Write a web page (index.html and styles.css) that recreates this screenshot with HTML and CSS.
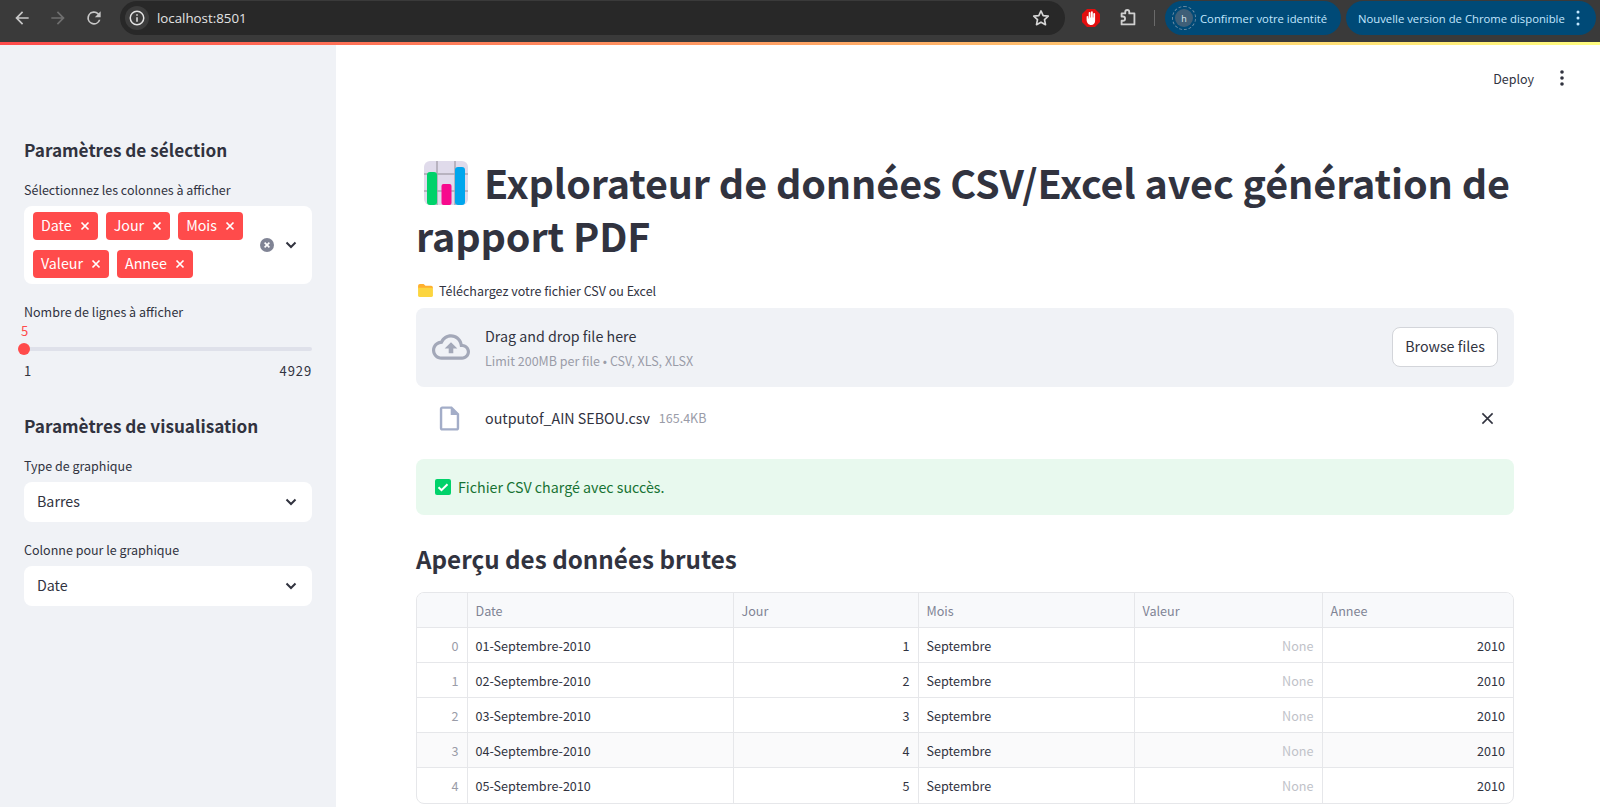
FILE: index.html
```html
<!DOCTYPE html>
<html lang="fr">
<head>
<meta charset="utf-8">
<title>localhost:8501</title>
<link rel="stylesheet" href="styles.css">
</head>
<body>
<header class="chrome">
  <div class="nav">
    <svg class="nav-icon" viewBox="0 0 24 24"><path d="M20 11H7.800l5.600-5.600L12 4l-8 8 8 8 1.400-1.400L7.800 13H20z" fill="#c7c7c7"/></svg>
    <svg class="nav-icon" viewBox="0 0 24 24"><path d="M4 11h12.200l-5.600-5.600L12 4l8 8-8 8-1.400-1.400 5.600-5.600H4z" fill="#6f6f6f"/></svg>
    <svg class="nav-icon" viewBox="0 0 24 24"><path d="M17.650 6.350A8 8 0 1 0 19.730 14h-2.080A6 6 0 1 1 12 6c1.660 0 3.140.69 4.220 1.780L13 11h7V4z" fill="#c7c7c7"/></svg>
  </div>
  <div class="omnibox">
    <span class="info"><svg viewBox="0 0 24 24" width="18" height="18"><circle cx="12" cy="12" r="9" fill="none" stroke="#e3e3e3" stroke-width="2"/><path d="M11 11h2v6h-2zM11 7h2v2h-2z" fill="#e3e3e3"/></svg></span>
    <span class="url">localhost:8501</span>
    <svg class="star" viewBox="0 0 24 24"><path d="M12 3.500l2.600 5.600 6.100.7-4.500 4.200 1.200 6L12 17l-5.400 3 1.200-6-4.500-4.200 6.100-.7z" fill="none" stroke="#d6d6d6" stroke-width="2" stroke-linejoin="round"/></svg>
  </div>
  <svg class="hand" viewBox="0 0 20 20"><path d="M6 1h8l5 5v8l-5 5H6l-5-5V6z" fill="#e20f0f"/><path d="M5.600 8.500V11.500c0 3.300 1.900 5.500 4.500 5.500s4-1.800 4-4V5.800a.9.900 0 0 0-1.800 0V9.500h-.5V4.200a.9.900 0 0 0-1.800 0V9.500h-.5V4.800a.9.900 0 0 0-1.800 0V10.500h-.4V8.500a.9.900 0 0 0-1.700 0z" fill="#fff"/></svg>
  <svg class="puzzle" viewBox="0 0 24 24"><path d="M9 5.500a2.200 2.200 0 0 1 4.400 0V7H19v12H5v-4h1.500a2.300 2.300 0 0 0 0-4.600H5V7h4z" fill="none" stroke="#d0d0d0" stroke-width="2" stroke-linejoin="round"/></svg>
  <span class="divider"></span>
  <div class="chip chip-id">
    <span class="avatar">h</span>
    <span>Confirmer votre identité</span>
  </div>
  <div class="chip chip-update">
    <span>Nouvelle version de Chrome disponible</span>
    <svg class="chip-dots" viewBox="0 0 4 16"><circle cx="2" cy="2" r="1.500"/><circle cx="2" cy="8" r="1.500"/><circle cx="2" cy="14" r="1.500"/></svg>
  </div>
</header>
<div class="decoration"></div>
<div class="app">
  <aside class="sidebar">
    <h2 class="side-heading first">Paramètres de sélection</h2>
    <label class="label label-first">Sélectionnez les colonnes à afficher</label>
    <div class="multiselect">
      <div class="tags">
        <span class="tag">Date<svg class="tag-x" viewBox="0 0 10 10"><path d="M1.500 1.500l7 7M8.500 1.500l-7 7"/></svg></span>
        <span class="tag">Jour<svg class="tag-x" viewBox="0 0 10 10"><path d="M1.500 1.500l7 7M8.500 1.500l-7 7"/></svg></span>
        <span class="tag">Mois<svg class="tag-x" viewBox="0 0 10 10"><path d="M1.500 1.500l7 7M8.500 1.500l-7 7"/></svg></span>
        <span class="tag">Valeur<svg class="tag-x" viewBox="0 0 10 10"><path d="M1.500 1.500l7 7M8.500 1.500l-7 7"/></svg></span>
        <span class="tag">Annee<svg class="tag-x" viewBox="0 0 10 10"><path d="M1.500 1.500l7 7M8.500 1.500l-7 7"/></svg></span>
      </div>
      <svg class="clear" viewBox="0 0 14 14"><circle cx="7" cy="7" r="7" fill="#808495"/><path d="M4.600 4.600l4.800 4.800M9.400 4.600l-4.800 4.800" stroke="#fff" stroke-width="1.600"/></svg>
      <svg class="chevron" viewBox="0 0 12 8"><path d="M1.500 1.500L6 6l4.500-4.500" fill="none" stroke="#31333f" stroke-width="2"/></svg>
    </div>
    <label class="label label-slider">Nombre de lignes à afficher</label>
    <div class="slider">
      <div class="slider-value">5</div>
      <div class="track"><span class="thumb"></span></div>
      <div class="slider-range"><span>1</span><span>4929</span></div>
    </div>
    <h2 class="side-heading second">Paramètres de visualisation</h2>
    <label class="label label-first">Type de graphique</label>
    <div class="select"><span>Barres</span><svg class="chevron" viewBox="0 0 12 8"><path d="M1.500 1.500L6 6l4.500-4.500" fill="none" stroke="#31333f" stroke-width="2"/></svg></div>
    <label class="label label-next">Colonne pour le graphique</label>
    <div class="select"><span>Date</span><svg class="chevron" viewBox="0 0 12 8"><path d="M1.500 1.500L6 6l4.500-4.500" fill="none" stroke="#31333f" stroke-width="2"/></svg></div>
  </aside>
  <main class="main">
    <div class="toolbar">
      <span class="deploy">Deploy</span>
      <svg class="menu-dots" viewBox="0 0 4 16"><circle cx="2" cy="2" r="1.800"/><circle cx="2" cy="8" r="1.800"/><circle cx="2" cy="14" r="1.800"/></svg>
    </div>
    <h1 class="title"><svg class="title-emoji" viewBox="0 0 44 44"><rect width="44" height="44" rx="6" fill="#e0dbeb"/><path d="M13 0v44M31 0v44M0 13h44M0 30h44" stroke="#aaa6b3" stroke-width="1.500"/><rect x="3" y="11" width="10" height="33" rx="3" fill="#00d26a"/><rect x="17.500" y="23" width="10" height="21" rx="2" fill="#f70a8d"/><rect x="31" y="6" width="10" height="38" rx="3" fill="#00a6ed"/></svg>Explorateur de données CSV/Excel avec génération de<br>rapport PDF</h1>
    <div class="caption"><svg class="folder" viewBox="0 0 16 14"><path d="M0 2a2 2 0 0 1 2-2h4l2 2h6a2 2 0 0 1 2 2v1H0z" fill="#ffb02e"/><path d="M0 4h14a2 2 0 0 1 2 2v6a2 2 0 0 1-2 2H2a2 2 0 0 1-2-2z" fill="#fcd53f"/></svg>Téléchargez votre fichier CSV ou Excel</div>
    <section class="uploader">
      <svg class="cloud" viewBox="0 0 24 24"><path d="M19.350 10.040C18.670 6.590 15.640 4 12 4 9.110 4 6.600 5.640 5.350 8.040 2.340 8.360 0 10.910 0 14c0 3.310 2.690 6 6 6h13c2.760 0 5-2.240 5-5 0-2.640-2.050-4.780-4.650-4.960zM19 18H6c-2.210 0-4-1.790-4-4 0-2.050 1.530-3.760 3.560-3.970l1.070-.11.5-.95C8.080 7.140 9.940 6 12 6c2.620 0 4.880 1.860 5.390 4.430l.3 1.500 1.530.11c1.560.1 2.780 1.410 2.780 2.960 0 1.650-1.350 3-3 3zM8 13h2.550v3h2.900v-3H16l-4-4z"/></svg>
      <div class="upload-text">
        <div class="upload-main">Drag and drop file here</div>
        <div class="upload-sub">Limit 200MB per file • CSV, XLS, XLSX</div>
      </div>
      <button class="browse">Browse files</button>
    </section>
    <div class="file-row">
      <svg class="file-icon" viewBox="0 0 24 24"><path d="M14 2H6c-1.100 0-1.990.9-1.990 2L4 20c0 1.100.89 2 1.990 2H18c1.100 0 2-.9 2-2V8l-6-6zM6 20V4h7v5h5v11H6z"/></svg>
      <span class="file-name">outputof_AIN SEBOU.csv</span>
      <span class="file-size">165.4KB</span>
      <svg class="file-x" viewBox="0 0 14 14"><path d="M1.500 1.500l11 11M12.500 1.500l-11 11"/></svg>
    </div>
    <div class="alert"><svg class="check" viewBox="0 0 16 16"><rect width="16" height="16" rx="2" fill="#00d26a"/><path d="M3.500 8.200l3 3 6-6" fill="none" stroke="#fff" stroke-width="2"/></svg>Fichier CSV chargé avec succès.</div>
    <h2 class="section-heading">Aperçu des données brutes</h2>
    <div class="table-wrap">
      <table class="data">
        <thead>
          <tr><th class="c-idx"></th><th class="c-date">Date</th><th class="c-jour">Jour</th><th class="c-mois">Mois</th><th class="c-val">Valeur</th><th>Annee</th></tr>
        </thead>
        <tbody>
          <tr><td class="idx">0</td><td>01-Septembre-2010</td><td class="num">1</td><td>Septembre</td><td class="num none">None</td><td class="num">2010</td></tr>
          <tr><td class="idx">1</td><td>02-Septembre-2010</td><td class="num">2</td><td>Septembre</td><td class="num none">None</td><td class="num">2010</td></tr>
          <tr><td class="idx">2</td><td>03-Septembre-2010</td><td class="num">3</td><td>Septembre</td><td class="num none">None</td><td class="num">2010</td></tr>
          <tr class="hover"><td class="idx">3</td><td>04-Septembre-2010</td><td class="num">4</td><td>Septembre</td><td class="num none">None</td><td class="num">2010</td></tr>
          <tr><td class="idx">4</td><td>05-Septembre-2010</td><td class="num">5</td><td>Septembre</td><td class="num none">None</td><td class="num">2010</td></tr>
        </tbody>
      </table>
    </div>
  </main>
</div>
</body>
</html>
```
FILE: styles.css
```css
* { box-sizing: border-box; }
html, body { margin: 0; height: 807px; overflow: hidden; }
body {
  font-family: "Noto Sans CJK JP", "Source Sans Pro", "Noto Sans", sans-serif;
  color: #31333f;
  background: #fff;
  display: flex;
  flex-direction: column;
}

/* Browser bar */
.chrome {
  height: 42px;
  flex: none;
  background: #3a3a3a;
  display: flex;
  align-items: center;
  padding-bottom: 6px;
  font-family: "Open Sans", "Noto Sans", sans-serif;
  color: #e3e3e3;
}
.nav { display: flex; align-items: center; gap: 16px; padding-left: 12px; width: 120px; }
.nav-icon { width: 20px; height: 20px; flex: none; }
.omnibox {
  width: 945px;
  height: 34px;
  background: #282828;
  border-radius: 17px;
  display: flex;
  align-items: center;
  padding-left: 5px;
  padding-right: 14px;
}
.info {
  width: 24px; height: 24px; border-radius: 50%;
  background: #3c3c3c;
  display: flex; align-items: center; justify-content: center;
}
.url { margin-left: 8px; font-size: 13.300px; flex: 1; color: #e3e3e3; }
.star { width: 20px; height: 20px; }
.hand { width: 20px; height: 20px; margin-left: 16px; }
.puzzle { width: 22px; height: 22px; margin-left: 16px; }
.divider { width: 1px; height: 16px; background: #6a6a6a; margin-left: 15px; margin-right: 10px; }
.chip {
  height: 34px;
  border-radius: 17px;
  background: #004a77;
  color: #c2e7ff;
  font-size: 11.300px;
  display: flex;
  align-items: center;
  white-space: nowrap;
}
.chip-id { width: 176px; padding-left: 10px; gap: 7px; }
.chip-update { width: 250px; margin-left: 5px; padding-left: 12px; }
.avatar {
  width: 18px; height: 18px; border-radius: 50%;
  background: #3f5f78;
  outline: 1px dashed #6b8ba3;
  outline-offset: 2px;
  font-size: 9px;
  display: flex; align-items: center; justify-content: center;
  color: #dfe9f0;
}
.chip-dots { width: 4px; height: 16px; fill: #c2e7ff; margin-left: 11px; }

.decoration {
  height: 3px;
  flex: none;
  background: linear-gradient(90deg, #ff4b4b, #fffd80);
}

.app { flex: 1; display: flex; min-height: 0; }

/* Sidebar */
.sidebar {
  width: 336px;
  flex: none;
  background: #f0f2f6;
  padding: 0 24px;
}
.side-heading { margin: 0; font-size: 17.200px; line-height: 28px; font-weight: 600; }
.side-heading.first { margin-top: 91px; }
.side-heading.second { margin-top: 32px; }
.label { display: block; font-size: 12.500px; line-height: 20px; }
.label-first { margin-top: 16px; margin-bottom: 6px; }
.label-slider { margin-top: 18px; }
.label-next { margin-top: 18px; margin-bottom: 6px; }

.multiselect {
  height: 78px;
  background: #fff;
  border-radius: 8px;
  display: flex;
  align-items: center;
  padding-left: 9px;
}
.tags { width: 224px; display: flex; flex-wrap: wrap; gap: 10px 8px; }
.tag {
  height: 28px;
  background: #ff4b4b;
  color: #fff;
  border-radius: 4px;
  padding: 0 8px 3px;
  font-size: 14.250px;
  display: inline-flex;
  align-items: center;
  gap: 8px;
}
.tag-x { width: 10px; height: 10px; margin-top: 3px; fill: none; stroke: #fff; stroke-width: 1.700; }
.clear { width: 14px; height: 14px; margin-left: 3px; }
.chevron { width: 12px; height: 8px; flex: none; }
.multiselect .chevron { margin-left: 11px; }

.slider { height: 59px; position: relative; }
.slider-value { color: #ff4b4b; font-size: 13px; line-height: 20px; margin-left: -6px; margin-top: -1px; width: 13px; text-align: center; }
.track { height: 4px; margin-top: 6px; background: #dfe1ea; border-radius: 2px; position: relative; }
.thumb {
  position: absolute;
  left: -6px; top: -4px;
  width: 12px; height: 12px;
  border-radius: 50%;
  background: #ff4b4b;
}
.slider-range {
  display: flex; justify-content: space-between;
  font-size: 13px; line-height: 20px; margin-top: 10px;
  font-variant-numeric: tabular-nums;
  letter-spacing: .9px;
}

.select {
  height: 40px;
  background: #fff;
  border-radius: 8px;
  display: flex;
  align-items: center;
  justify-content: space-between;
  padding: 0 15px 0 13px;
  font-size: 14.250px;
}
.select span { margin-top: -3px; }

/* Main */
.main { flex: 1; min-width: 0; padding: 0 86px 0 80px; }
.toolbar {
  height: 66px;
  margin-right: -86px;
  display: flex;
  align-items: center;
  justify-content: flex-end;
  padding-right: 36px;
  font-size: 12.500px;
}
.deploy { margin-right: 26px; }
.menu-dots { width: 4px; height: 16px; fill: #31333f; }
.title {
  margin: 45px 0 0;
  font-size: 39.500px;
  line-height: 52.800px;
  font-weight: 700;
  letter-spacing: -.1px;
  white-space: nowrap;
}
.title-emoji { width: 44px; height: 44px; margin: 0 16px 0 8px; vertical-align: -6px; }
.caption {
  margin-top: 19px;
  font-size: 12.500px;
  line-height: 20px;
  display: flex;
  align-items: center;
}
.folder { width: 15px; height: 13px; margin: 0 6px 0 2px; }
.uploader {
  margin-top: 7px;
  height: 79px;
  background: #f0f2f6;
  border-radius: 8px;
  display: flex;
  align-items: center;
  padding: 0 16px;
}
.cloud { width: 38px; height: 38px; fill: #a3a8b8; flex: none; }
.upload-text { flex: 1; margin-left: 15px; }
.upload-main { font-size: 14.250px; line-height: 24px; }
.upload-sub { font-size: 12.500px; line-height: 20px; margin-top: 3px; color: #9a9ca8; }
.browse {
  width: 106px; height: 40px;
  background: #fff;
  border: 1px solid #d3d5da;
  border-radius: 8px;
  font: inherit;
  font-size: 14.250px;
  color: #31333f;
  padding: 0 0 3px;
}
.file-row {
  height: 64px;
  display: flex;
  align-items: center;
  padding-left: 19px;
}
.file-icon { width: 29px; height: 29px; fill: #a3adc8; flex: none; }
.file-name { margin-left: 21px; margin-top: -3px; font-size: 14.250px; }
.file-size { margin-left: 9px; margin-top: -3px; font-size: 12.500px; color: #9a9ca8; }
.file-x { width: 13px; height: 13px; margin-left: auto; margin-right: 20px; fill: none; stroke: #31333f; stroke-width: 1.700; }
.alert {
  margin-top: 8px;
  height: 56px;
  background: #e8f9ee;
  border-radius: 8px;
  display: flex;
  align-items: center;
  padding-left: 19px;
  color: #177233;
  font-size: 14.250px;
}
.check { width: 16px; height: 16px; margin-right: 7px; }
.section-heading {
  margin: 25px 0 0;
  font-size: 24.200px;
  line-height: 38px;
  font-weight: 600;
}
.table-wrap {
  margin-top: 14px;
  height: 212px;
  border: 1px solid #e6e7ea;
  border-radius: 8px;
  overflow: hidden;
}
.data {
  width: 100%;
  height: 210px;
  table-layout: fixed;
  border-collapse: collapse;
  font-size: 12.600px;
}
.data th, .data td {
  border-left: 1px solid #e6e7ea;
  border-top: 1px solid #e6e7ea;
  padding: 0 8px;
  font-weight: 400;
  text-align: left;
  white-space: nowrap;
}
.data th:first-child, .data td:first-child { border-left: 0; }
.data thead th { height: 35px; padding-top: 2px; background: #f8f9fb; color: #808495; border-top: 0; }
.data tbody td { height: 35px; }
.c-idx { width: 50px; }
.c-date { width: 266px; }
.c-jour { width: 185px; }
.c-mois { width: 216px; }
.c-val { width: 188px; }
.data .idx { text-align: right; color: #9a9ca8; }
.data .num { text-align: right; }
.data .none { color: #c0c2c9; }
.hover td { background: #fafafb; }
```
